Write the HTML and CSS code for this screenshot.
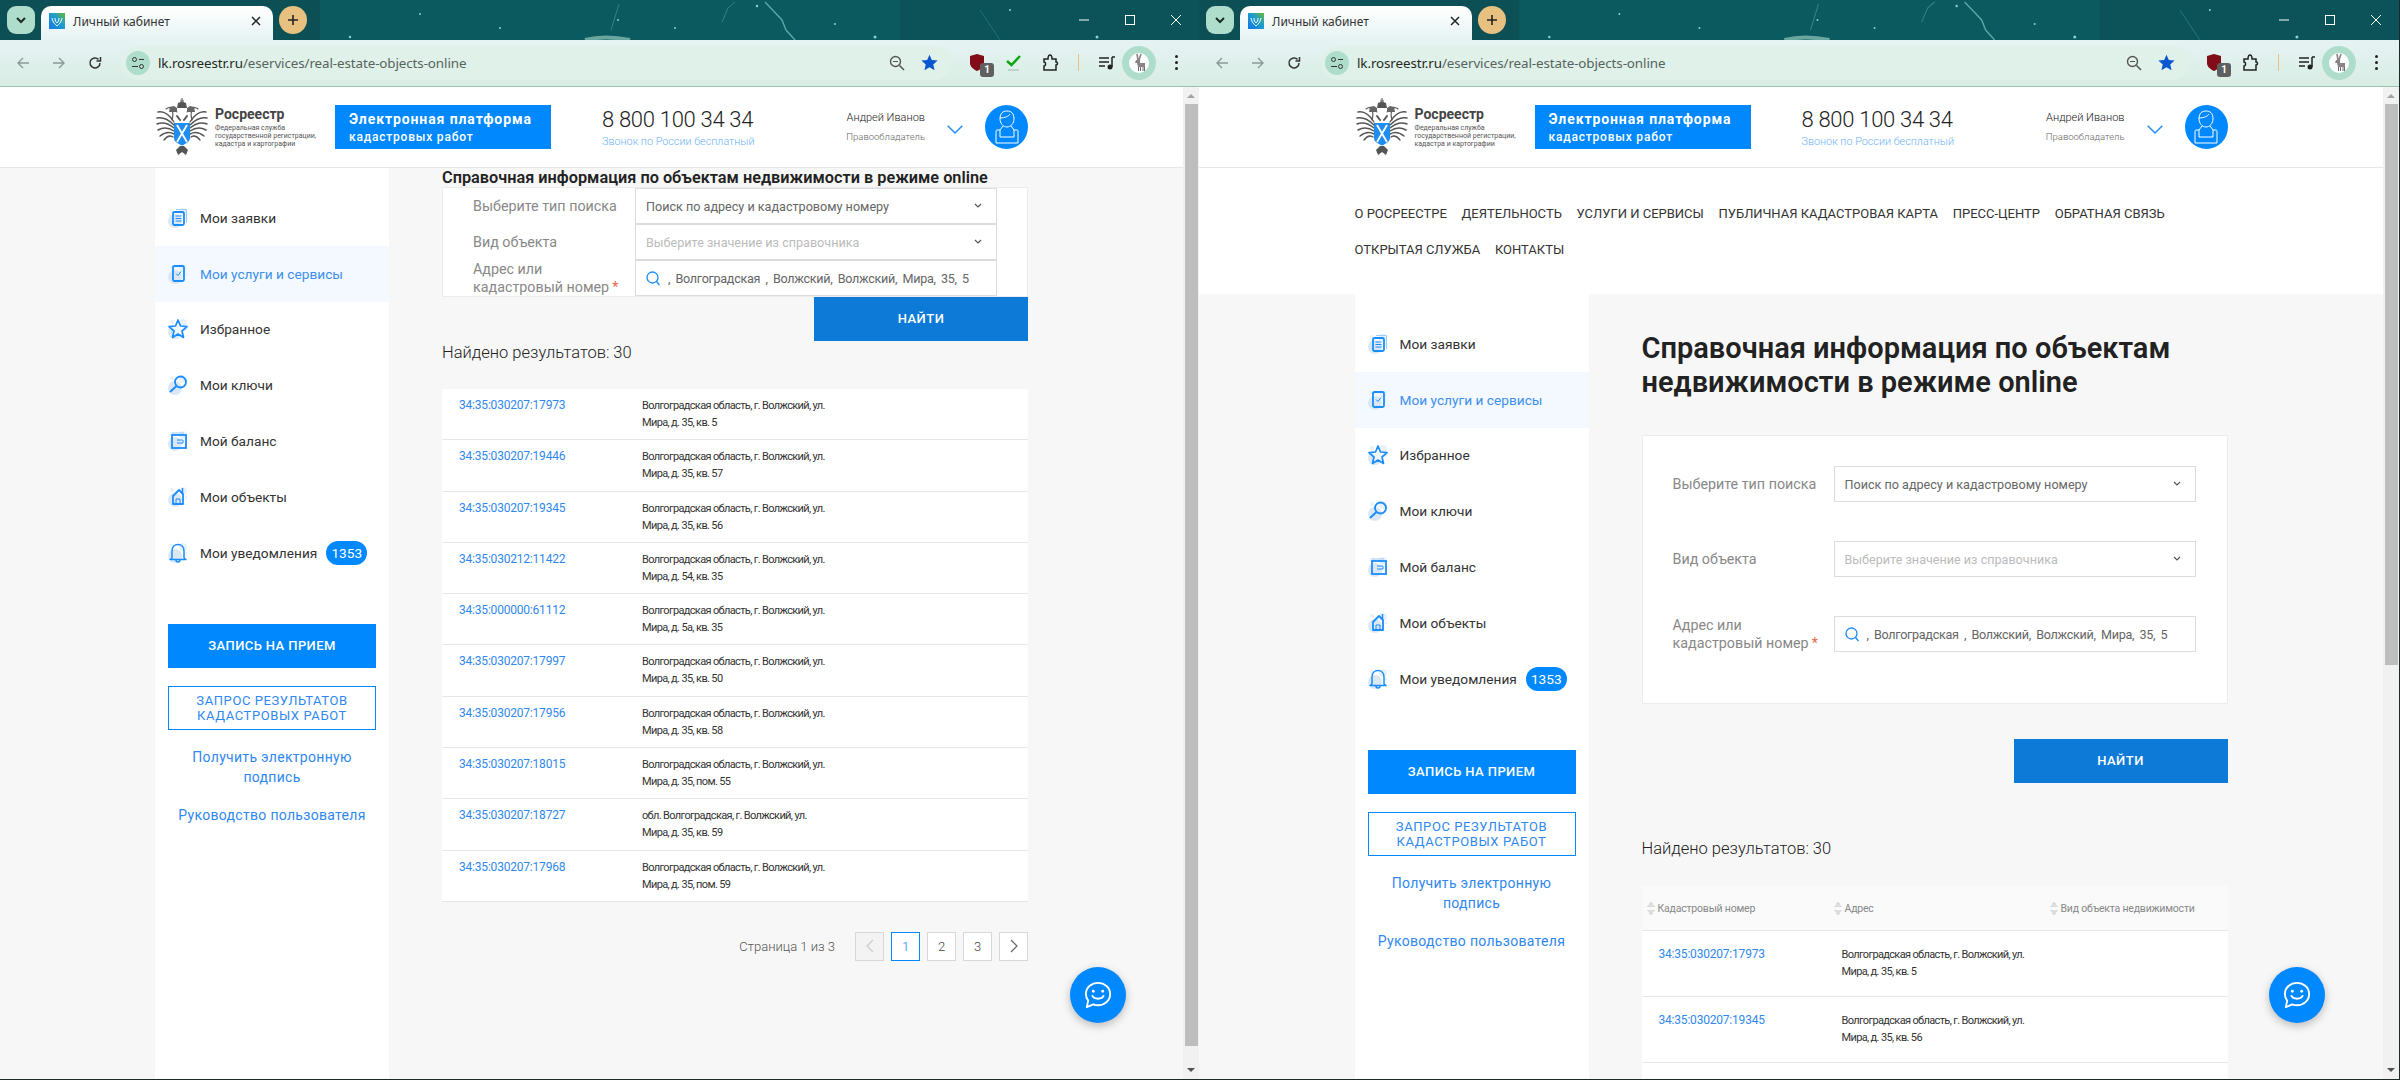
FILE: index.html
```html
<!DOCTYPE html>
<html lang="ru">
<head>
    <meta charset="UTF-8">
    <title>Личный кабинет</title>
    <link rel="stylesheet" href="styles.css">
</head>
<body>

<svg class="defs" width="0" height="0">
    <defs>
        <linearGradient id="favGrad" x1="0" y1="1" x2="1" y2="0">
            <stop offset="0" stop-color="#1476e8"/>
            <stop offset="0.6" stop-color="#20a0c8"/>
            <stop offset="1" stop-color="#6cb82c"/>
        </linearGradient>

        <symbol id="wallpaper" viewBox="0 0 1199 40" preserveAspectRatio="none">
            <rect width="1199" height="40" fill="#0b5a60"/>
            <rect width="320" height="40" fill="#0c4d52" opacity=".8"/>
            <rect x="900" width="299" height="40" fill="#0b4f57" opacity=".7"/>
            <path d="M619 4 L 611 30" stroke="#2f8487" stroke-width="1" fill="none"/>
            <path d="M765 2 L 782 20 L 786 30 L 795 40" stroke="#5aa7a6" stroke-width="1.400" fill="none"/>
            <path d="M722 22 L 728 8 L 735 2" stroke="#2f8487" stroke-width="1" fill="none"/>
            <path d="M980 10 L 1000 40" stroke="#1f7377" stroke-width="1" fill="none"/>
            <path d="M585 40 Q 605 35 630 40" stroke="#a8d8c8" stroke-width="4" fill="none" opacity=".6"/>
            <g fill="#8fd0cc">
                <circle cx="757" cy="6" r="1.200"/><circle cx="875" cy="37" r="1.500"/><circle cx="1097" cy="37" r="1.500"/>
                <circle cx="618" cy="20" r="1"/><circle cx="675" cy="28" r="1"/><circle cx="835" cy="24" r="1"/>
                <circle cx="350" cy="37" r="1.200"/><circle cx="420" cy="14" r="1"/><circle cx="500" cy="28" r="1"/>
                <circle cx="1010" cy="10" r="1"/>
            </g>
        </symbol>

        <symbol id="emblem" viewBox="0 0 52 58">
            <g fill="none" stroke="#555" stroke-linecap="round">
                <path d="M18 24 C13 16 7 13 2 14" stroke-width="1.300"/>
                <path d="M18 27 C12 21 6 19 1 20" stroke-width="1.500"/>
                <path d="M18 30 C12 25 6 24 1 26" stroke-width="1.500"/>
                <path d="M18 33 C12 29 7 29 2 32" stroke-width="1.500"/>
                <path d="M18 36 C13 33 9 34 4 38" stroke-width="1.500"/>
                <path d="M17 39 C14 37 11 38 8 42" stroke-width="1.400"/>
                <path d="M16 22 C18 15 17 12 14 10" stroke-width="1.200"/>
                <path d="M21 14 C18 9 14 8 10 11" stroke-width="1.100"/>
                <path d="M34 24 C39 16 45 13 50 14" stroke-width="1.300"/>
                <path d="M34 27 C40 21 46 19 51 20" stroke-width="1.500"/>
                <path d="M34 30 C40 25 46 24 51 26" stroke-width="1.500"/>
                <path d="M34 33 C40 29 45 29 50 32" stroke-width="1.500"/>
                <path d="M34 36 C39 33 43 34 48 38" stroke-width="1.500"/>
                <path d="M35 39 C38 37 41 38 44 42" stroke-width="1.400"/>
                <path d="M36 22 C34 15 35 12 38 10" stroke-width="1.200"/>
                <path d="M31 14 C34 9 38 8 42 11" stroke-width="1.100"/>
                <path d="M21 18 L24 22 M31 18 L28 22" stroke-width="2"/>
            </g>
            <path d="M26 0 v3 M24 3 h4" stroke="#4a4a4a" stroke-width="1" fill="none"/>
            <path d="M21 10 L22 5 L26 3.500 L30 5 L31 10 Z" fill="#555"/>
            <path d="M13 14 L14 9 L18 8 L21 10 L21 14 Z M31 14 L31 10 L34 8 L38 9 L39 14 Z" fill="#666"/>
            <path d="M24 48 L20 52 L22 57 L26 54 L30 57 L32 52 L28 48 Z" fill="#555"/>
            <path d="M18 25 H34 V40 C34 44 29 46 26 47.500 C23 46 18 44 18 40 Z" fill="#1f8cf0"/>
            <path d="M21 27 L31 44 M31 27 L21 44" stroke="#fff" stroke-width="1.800"/>
        </symbol>

        <symbol id="userIcon" viewBox="0 0 24 34">
            <g fill="none" stroke="#fff" stroke-width="1">
                <path d="M5 9 C5 3 8 1 12 1 C16 1 19 3 19 9 C19 13 16 17 12 17 C8 17 5 13 5 9 Z"/>
                <path d="M5 8 C10 8 14 6 15 4"/>
                <path d="M8 16 L5 20 H2 C1 20 1 21 1 22 V33 H23 V22 C23 21 23 20 22 20 H19 L16 16"/>
                <path d="M5 20 V27 H19 V20"/>
            </g>
        </symbol>

        <symbol id="chatIcon" viewBox="0 0 30 30">
            <path d="M15 2 C22 2 28 7 28 14 C28 21 22 26 15 26 C13 26 12 26 10 25 L3 28 L4.500 21 C3 19 2 17 2 14 C2 7 8 2 15 2 Z" fill="none" stroke="#fff" stroke-width="2" stroke-linejoin="round"/>
            <circle cx="10" cy="11" r="1.500" fill="#fff"/>
            <circle cx="20" cy="11" r="1.500" fill="#fff"/>
            <path d="M9 16 C11 20 19 20 21 16" fill="none" stroke="#fff" stroke-width="2" stroke-linecap="round"/>
        </symbol>

        <symbol id="searchBlue" viewBox="0 0 14 15">
            <circle cx="6.500" cy="6.500" r="5.500" fill="none" stroke="#1a8cff" stroke-width="1.300"/>
            <path d="M10.500 10.500 L13.500 14" stroke="#1a8cff" stroke-width="1.300"/>
        </symbol>

        <symbol id="blob" viewBox="0 0 20 22">
            <circle cx="7" cy="14" r="7" fill="#dbe8f4"/>
            <circle cx="15" cy="5" r="4" fill="#e8f1f9"/>
            <circle cx="4" cy="4" r="2" fill="#e8f1f9"/>
            <circle cx="18" cy="11" r="1.500" fill="#e8f1f9"/>
        </symbol>

        <symbol id="donkey" viewBox="0 0 20 20">
            <circle cx="10" cy="10" r="10" fill="#fff"/>
            <path d="M8 1 L9 7 M12 1 L10 7" stroke="#8a8288" stroke-width="1.600" fill="none"/>
            <path d="M7 7 H11 V10 H16 V14 H9 L8 10 L6 10 Z" fill="#8a8288"/>
            <path d="M9.500 14 V18 M11.500 14 V18 M14 14 V18 M15.500 14 V18" stroke="#6f686e" stroke-width="1"/>
        </symbol>
    </defs>
</svg>

<div class="desktop">

    <!-- левое окно -->
    <div class="window compact">
        <div class="tabstrip">
            <svg class="wallpaper"><use href="#wallpaper"/></svg>
            <span class="tab-list"><svg width="12" height="8" viewBox="0 0 12 8"><path d="M2 2 L6 6 L10 2" fill="none" stroke="#1c2a26" stroke-width="2"/></svg></span>
            <div class="tab">
                <svg class="favicon" viewBox="0 0 16 16"><rect width="16" height="16" fill="url(#favGrad)"/><path d="M3 5 C4 10 6 11 8 13 C10 11 12 10 13 5 M6 5 C6 8 7 9 8 10 C9 9 10 8 10 5" fill="none" stroke="#fff" stroke-width="1"/></svg>
                <span class="tab-title">Личный кабинет</span>
                <svg class="tab-close" width="10" height="10" viewBox="0 0 10 10"><path d="M1 1 L9 9 M9 1 L1 9" stroke="#222" stroke-width="1.500"/></svg>
            </div>
            <span class="new-tab"><svg width="12" height="12" viewBox="0 0 12 12"><path d="M6 1 V11 M1 6 H11" stroke="#222" stroke-width="1.600"/></svg></span>
            <div class="win-controls">
                <svg width="12" height="12" viewBox="0 0 12 12"><path d="M1 6 H11" stroke="#fff"/></svg>
                <svg width="12" height="12" viewBox="0 0 12 12"><rect x="1.500" y="1.500" width="9" height="9" fill="none" stroke="#fff"/></svg>
                <svg width="12" height="12" viewBox="0 0 12 12"><path d="M1 1 L11 11 M11 1 L1 11" stroke="#fff"/></svg>
            </div>
        </div>
        <div class="toolbar">
            <span class="nav-btn"><svg width="14" height="14" viewBox="0 0 14 14"><path d="M13 7 H2 M7 2 L2 7 L7 12" fill="none" stroke="#8b9b95" stroke-width="1.400"/></svg></span>
            <span class="nav-btn"><svg width="14" height="14" viewBox="0 0 14 14"><path d="M1 7 H12 M7 2 L12 7 L7 12" fill="none" stroke="#8b9b95" stroke-width="1.400"/></svg></span>
            <span class="nav-btn"><svg width="14" height="14" viewBox="0 0 14 14"><path d="M12 7 A5 5 0 1 1 10.500 3.400 M12.500 1 V5 H8.500" fill="none" stroke="#333" stroke-width="1.500"/></svg></span>
            <div class="omnibox">
                <span class="site-chip"><svg width="14" height="14" viewBox="0 0 14 14"><circle cx="3.500" cy="3.500" r="2" fill="none" stroke="#333"/><path d="M8 3.500 H13 M1 10.500 H7" stroke="#333"/><circle cx="10.500" cy="10.500" r="2" fill="none" stroke="#333"/></svg></span>
                <span class="url">lk.rosreestr.ru<span class="url-path">/eservices/real-estate-objects-online</span></span>
                <svg class="omni-zoom" width="16" height="16" viewBox="0 0 16 16"><circle cx="6.500" cy="6.500" r="5" fill="none" stroke="#555" stroke-width="1.400"/><path d="M10.500 10.500 L15 15" stroke="#555" stroke-width="1.600"/><path d="M4 6.500 H9" stroke="#555"/></svg>
                <svg class="omni-star" width="17" height="17" viewBox="0 0 24 24"><path d="M12 1 L15.300 8.600 L23.500 9.300 L17.300 14.800 L19.200 23 L12 18.700 L4.800 23 L6.700 14.800 L.500 9.300 L8.700 8.600 Z" fill="#0b57d0"/></svg>
            </div>
            <span class="tb-btn"><svg width="14" height="17" viewBox="0 0 14 17"><path d="M7 0 L14 2 V9 C14 13 10 15.500 7 17 C4 15.500 0 13 0 9 V2 Z" fill="#800d17"/></svg><span class="ext-badge">1</span></span>
            <span class="tb-btn"><svg width="15" height="18" viewBox="0 0 15 18"><path d="M1 7 L5.500 11 L14 2" fill="none" stroke="#0ba70b" stroke-width="2.500"/><path d="M2 16 H13" stroke="#9db5aa"/></svg></span>
            <span class="tb-btn"><svg width="16" height="18" viewBox="0 0 16 18"><path d="M1 5 H5 C5 2 6 1 7 1 C8 1 9 2 9 5 H13 V8 C15 8 15 11 13 11 V16 H1 V12 C3 12 3 8 1 8 Z" fill="none" stroke="#222" stroke-width="1.500"/></svg></span>
            <span class="tb-sep"></span>
            <span class="tb-btn"><svg width="16" height="14" viewBox="0 0 16 14"><path d="M0 2 H10 M0 6 H10 M0 10 H6" stroke="#222" stroke-width="1.500"/><path d="M13 1 V11" stroke="#222" stroke-width="1.500"/><circle cx="11" cy="11" r="2.500" fill="#222"/><path d="M13 1 H16" stroke="#222" stroke-width="1.500"/></svg></span>
            <span class="profile"><svg width="20" height="20"><use href="#donkey"/></svg></span>
            <span class="dots"><i></i><i></i><i></i></span>
        </div>

        <div class="page">
            <div class="viewport">
                <header class="site-head">
                    <div class="container head-row">
                        <svg class="emblem"><use href="#emblem"/></svg>
                        <div class="org">
                            <div class="org-name">Росреестр</div>
                            <div class="org-sub">Федеральная служба<br>государственной регистрации,<br>кадастра и картографии</div>
                        </div>
                        <div class="platform">
                            <div class="platform-title">Электронная платформа</div>
                            <div class="platform-sub">кадастровых работ</div>
                        </div>
                        <div class="phone">
                            <div class="phone-num">8 800 100 34 34</div>
                            <div class="phone-note">Звонок по России бесплатный</div>
                        </div>
                        <div class="who">
                            <div class="who-name">Андрей Иванов</div>
                            <div class="who-role">Правообладатель</div>
                        </div>
                        <svg class="who-arrow" width="16" height="9" viewBox="0 0 16 9"><path d="M.7 .7 L8 8 L15.300 .7" fill="none" stroke="#1a8cff" stroke-width="1.400"/></svg>
                        <span class="avatar"><svg width="24" height="34"><use href="#userIcon"/></svg></span>
                    </div>
                </header>

                <div class="container body-row">
                    <aside class="sidebar">
                        <nav class="menu">
                            <a class="menu-item"><span class="ico"><svg class="ico-blob"><use href="#blob"/></svg><svg class="ico-line" viewBox="0 0 20 22"><rect x="5" y="5" width="11" height="13" rx="1.500" fill="none" stroke="#1a8cff" stroke-width="1.800"/><path d="M7.500 9 H13.500 M7.500 11.500 H13.500 M7.500 14 H13.500" stroke="#1a8cff"/><path d="M8 2.500 H18.500 V16" fill="none" stroke="#9ccbf8"/></svg></span>Мои заявки</a>
                            <a class="menu-item active"><span class="ico"><svg class="ico-blob"><use href="#blob"/></svg><svg class="ico-line" viewBox="0 0 20 22"><rect x="5" y="3" width="11" height="15" rx="1.500" fill="none" stroke="#1a8cff" stroke-width="1.800"/><path d="M8 10.500 L10 12.500 L13 8.500" fill="none" stroke="#1a8cff"/></svg></span>Мои услуги и сервисы</a>
                            <a class="menu-item"><span class="ico"><svg class="ico-blob"><use href="#blob"/></svg><svg class="ico-line" viewBox="0 0 20 22"><path d="M10 2 L12.500 8 L19 8.600 L14 13 L15.500 19.500 L10 16 L4.500 19.500 L6 13 L1 8.600 L7.500 8 Z" fill="#fff" fill-opacity=".6" stroke="#1a8cff" stroke-width="1.700" stroke-linejoin="round"/></svg></span>Избранное</a>
                            <a class="menu-item"><span class="ico"><svg class="ico-blob"><use href="#blob"/></svg><svg class="ico-line" viewBox="0 0 20 22"><circle cx="12.500" cy="8" r="5.500" fill="none" stroke="#1a8cff" stroke-width="1.800"/><path d="M8.500 12 L2 18" stroke="#1a8cff" stroke-width="2"/></svg></span>Мои ключи</a>
                            <a class="menu-item"><span class="ico"><svg class="ico-blob"><use href="#blob"/></svg><svg class="ico-line" viewBox="0 0 20 22"><rect x="4" y="5" width="14" height="13" fill="none" stroke="#1a8cff" stroke-width="1.800"/><path d="M9 10 H15 V13 H9" fill="none" stroke="#1a8cff"/><path d="M4 3 H16" stroke="#9ccbf8"/></svg></span>Мой баланс</a>
                            <a class="menu-item"><span class="ico"><svg class="ico-blob"><use href="#blob"/></svg><svg class="ico-line" viewBox="0 0 20 22"><path d="M5 10 L11 4 L15 8 V18 H5 Z" fill="none" stroke="#1a8cff" stroke-width="1.800" stroke-linejoin="round"/><path d="M14.500 2 V7" stroke="#1a8cff" stroke-width="1.500"/><path d="M8 18 V13 H12 V18" fill="none" stroke="#1a8cff"/></svg></span>Мои объекты</a>
                            <a class="menu-item"><span class="ico"><svg class="ico-blob"><use href="#blob"/></svg><svg class="ico-line" viewBox="0 0 20 22"><path d="M4 16 V9 C4 5 6.500 2.500 10 2.500 C13.500 2.500 16 5 16 9 V16 L18 17.500 H2 Z" fill="none" stroke="#1a8cff" stroke-width="1.500" stroke-linejoin="round"/><path d="M8 18 A2 2 0 0 0 12 18" fill="none" stroke="#1a8cff" stroke-width="1.500"/></svg></span>Мои уведомления<span class="menu-badge">1353</span></a>
                        </nav>
                        <div class="side-actions">
                            <a class="btn-primary">ЗАПИСЬ НА ПРИЕМ</a>
                            <a class="btn-outline">ЗАПРОС РЕЗУЛЬТАТОВ<br>КАДАСТРОВЫХ РАБОТ</a>
                            <a class="side-link">Получить электронную подпись</a>
                            <a class="side-link">Руководство пользователя</a>
                        </div>
                    </aside>

                    <main class="main">
                        <h1 class="page-title">Справочная информация по объектам недвижимости в режиме online</h1>
                        <form class="search-card">
                            <div class="field">
                                <label class="field-label">Выберите тип поиска</label>
                                <div class="control"><span class="control-text">Поиск по адресу и кадастровому номеру</span><svg class="caret" width="8" height="6" viewBox="0 0 8 6"><path d="M1 1 L4 4 L7 1" fill="none" stroke="#555" stroke-width="1.200"/></svg></div>
                            </div>
                            <div class="field">
                                <label class="field-label">Вид объекта</label>
                                <div class="control"><span class="control-text muted">Выберите значение из справочника</span><svg class="caret" width="8" height="6" viewBox="0 0 8 6"><path d="M1 1 L4 4 L7 1" fill="none" stroke="#555" stroke-width="1.200"/></svg></div>
                            </div>
                            <div class="field">
                                <label class="field-label">Адрес или<br>кадастровый номер<span class="req">*</span></label>
                                <div class="control"><svg class="search-ico" width="14" height="15"><use href="#searchBlue"/></svg><span class="control-text addr">, Волгоградская , Волжский, Волжский, Мира, 35, 5</span></div>
                            </div>
                        </form>
                        <div class="find-row"><a class="btn-find">НАЙТИ</a></div>
                        <div class="found">Найдено результатов: 30</div>
                        <div class="results">
                            <div class="res-row"><a class="res-num">34:35:030207:17973</a><div class="res-addr">Волгоградская область, г. Волжский, ул.<br>Мира, д. 35, кв. 5</div></div>
                            <div class="res-row"><a class="res-num">34:35:030207:19446</a><div class="res-addr">Волгоградская область, г. Волжский, ул.<br>Мира, д. 35, кв. 57</div></div>
                            <div class="res-row"><a class="res-num">34:35:030207:19345</a><div class="res-addr">Волгоградская область, г. Волжский, ул.<br>Мира, д. 35, кв. 56</div></div>
                            <div class="res-row"><a class="res-num">34:35:030212:11422</a><div class="res-addr">Волгоградская область, г. Волжский, ул.<br>Мира, д. 54, кв. 35</div></div>
                            <div class="res-row"><a class="res-num">34:35:000000:61112</a><div class="res-addr">Волгоградская область, г. Волжский, ул.<br>Мира, д. 5а, кв. 35</div></div>
                            <div class="res-row"><a class="res-num">34:35:030207:17997</a><div class="res-addr">Волгоградская область, г. Волжский, ул.<br>Мира, д. 35, кв. 50</div></div>
                            <div class="res-row"><a class="res-num">34:35:030207:17956</a><div class="res-addr">Волгоградская область, г. Волжский, ул.<br>Мира, д. 35, кв. 58</div></div>
                            <div class="res-row"><a class="res-num">34:35:030207:18015</a><div class="res-addr">Волгоградская область, г. Волжский, ул.<br>Мира, д. 35, пом. 55</div></div>
                            <div class="res-row"><a class="res-num">34:35:030207:18727</a><div class="res-addr">обл. Волгоградская, г. Волжский, ул.<br>Мира, д. 35, кв. 59</div></div>
                            <div class="res-row"><a class="res-num">34:35:030207:17968</a><div class="res-addr">Волгоградская область, г. Волжский, ул.<br>Мира, д. 35, пом. 59</div></div>
                        </div>
                        <div class="pager">
                            <span class="pager-info">Страница 1 из 3</span>
                            <span class="pg disabled"><svg width="8" height="14" viewBox="0 0 8 14"><path d="M7 1 L1 7 L7 13" fill="none" stroke="#ccc" stroke-width="1.200"/></svg></span>
                            <span class="pg current">1</span>
                            <span class="pg">2</span>
                            <span class="pg">3</span>
                            <span class="pg"><svg width="8" height="14" viewBox="0 0 8 14"><path d="M1 1 L7 7 L1 13" fill="none" stroke="#666" stroke-width="1.200"/></svg></span>
                        </div>
                    </main>
                </div>
                <a class="chat-fab"><svg width="28" height="28"><use href="#chatIcon"/></svg></a>
            </div>
            <div class="scrollbar">
                <span class="sb-up"></span>
                <span class="sb-thumb"></span>
                <span class="sb-down"></span>
            </div>
        </div>
    </div>

    <!-- правое окно -->
    <div class="window full">
        <div class="tabstrip">
            <svg class="wallpaper"><use href="#wallpaper"/></svg>
            <span class="tab-list"><svg width="12" height="8" viewBox="0 0 12 8"><path d="M2 2 L6 6 L10 2" fill="none" stroke="#1c2a26" stroke-width="2"/></svg></span>
            <div class="tab">
                <svg class="favicon" viewBox="0 0 16 16"><rect width="16" height="16" fill="url(#favGrad)"/><path d="M3 5 C4 10 6 11 8 13 C10 11 12 10 13 5 M6 5 C6 8 7 9 8 10 C9 9 10 8 10 5" fill="none" stroke="#fff" stroke-width="1"/></svg>
                <span class="tab-title">Личный кабинет</span>
                <svg class="tab-close" width="10" height="10" viewBox="0 0 10 10"><path d="M1 1 L9 9 M9 1 L1 9" stroke="#222" stroke-width="1.500"/></svg>
            </div>
            <span class="new-tab"><svg width="12" height="12" viewBox="0 0 12 12"><path d="M6 1 V11 M1 6 H11" stroke="#222" stroke-width="1.600"/></svg></span>
            <div class="win-controls">
                <svg width="12" height="12" viewBox="0 0 12 12"><path d="M1 6 H11" stroke="#fff"/></svg>
                <svg width="12" height="12" viewBox="0 0 12 12"><rect x="1.500" y="1.500" width="9" height="9" fill="none" stroke="#fff"/></svg>
                <svg width="12" height="12" viewBox="0 0 12 12"><path d="M1 1 L11 11 M11 1 L1 11" stroke="#fff"/></svg>
            </div>
        </div>
        <div class="toolbar">
            <span class="nav-btn"><svg width="14" height="14" viewBox="0 0 14 14"><path d="M13 7 H2 M7 2 L2 7 L7 12" fill="none" stroke="#8b9b95" stroke-width="1.400"/></svg></span>
            <span class="nav-btn"><svg width="14" height="14" viewBox="0 0 14 14"><path d="M1 7 H12 M7 2 L12 7 L7 12" fill="none" stroke="#8b9b95" stroke-width="1.400"/></svg></span>
            <span class="nav-btn"><svg width="14" height="14" viewBox="0 0 14 14"><path d="M12 7 A5 5 0 1 1 10.500 3.400 M12.500 1 V5 H8.500" fill="none" stroke="#333" stroke-width="1.500"/></svg></span>
            <div class="omnibox">
                <span class="site-chip"><svg width="14" height="14" viewBox="0 0 14 14"><circle cx="3.500" cy="3.500" r="2" fill="none" stroke="#333"/><path d="M8 3.500 H13 M1 10.500 H7" stroke="#333"/><circle cx="10.500" cy="10.500" r="2" fill="none" stroke="#333"/></svg></span>
                <span class="url">lk.rosreestr.ru<span class="url-path">/eservices/real-estate-objects-online</span></span>
                <svg class="omni-zoom" width="16" height="16" viewBox="0 0 16 16"><circle cx="6.500" cy="6.500" r="5" fill="none" stroke="#555" stroke-width="1.400"/><path d="M10.500 10.500 L15 15" stroke="#555" stroke-width="1.600"/><path d="M4 6.500 H9" stroke="#555"/></svg>
                <svg class="omni-star" width="17" height="17" viewBox="0 0 24 24"><path d="M12 1 L15.300 8.600 L23.500 9.300 L17.300 14.800 L19.200 23 L12 18.700 L4.800 23 L6.700 14.800 L.500 9.300 L8.700 8.600 Z" fill="#0b57d0"/></svg>
            </div>
            <span class="tb-btn"><svg width="14" height="17" viewBox="0 0 14 17"><path d="M7 0 L14 2 V9 C14 13 10 15.500 7 17 C4 15.500 0 13 0 9 V2 Z" fill="#800d17"/></svg><span class="ext-badge">1</span></span>
            <span class="tb-btn"><svg width="16" height="18" viewBox="0 0 16 18"><path d="M1 5 H5 C5 2 6 1 7 1 C8 1 9 2 9 5 H13 V8 C15 8 15 11 13 11 V16 H1 V12 C3 12 3 8 1 8 Z" fill="none" stroke="#222" stroke-width="1.500"/></svg></span>
            <span class="tb-sep"></span>
            <span class="tb-btn"><svg width="16" height="14" viewBox="0 0 16 14"><path d="M0 2 H10 M0 6 H10 M0 10 H6" stroke="#222" stroke-width="1.500"/><path d="M13 1 V11" stroke="#222" stroke-width="1.500"/><circle cx="11" cy="11" r="2.500" fill="#222"/><path d="M13 1 H16" stroke="#222" stroke-width="1.500"/></svg></span>
            <span class="profile"><svg width="20" height="20"><use href="#donkey"/></svg></span>
            <span class="dots"><i></i><i></i><i></i></span>
        </div>

        <div class="page">
            <div class="viewport">
                <header class="site-head">
                    <div class="container head-row">
                        <svg class="emblem"><use href="#emblem"/></svg>
                        <div class="org">
                            <div class="org-name">Росреестр</div>
                            <div class="org-sub">Федеральная служба<br>государственной регистрации,<br>кадастра и картографии</div>
                        </div>
                        <div class="platform">
                            <div class="platform-title">Электронная платформа</div>
                            <div class="platform-sub">кадастровых работ</div>
                        </div>
                        <div class="phone">
                            <div class="phone-num">8 800 100 34 34</div>
                            <div class="phone-note">Звонок по России бесплатный</div>
                        </div>
                        <div class="who">
                            <div class="who-name">Андрей Иванов</div>
                            <div class="who-role">Правообладатель</div>
                        </div>
                        <svg class="who-arrow" width="16" height="9" viewBox="0 0 16 9"><path d="M.7 .7 L8 8 L15.300 .7" fill="none" stroke="#1a8cff" stroke-width="1.400"/></svg>
                        <span class="avatar"><svg width="24" height="34"><use href="#userIcon"/></svg></span>
                    </div>
                </header>

                <nav class="site-nav">
                    <div class="container nav-links">
                        <a>О РОСРЕЕСТРЕ</a>
                        <a>ДЕЯТЕЛЬНОСТЬ</a>
                        <a>УСЛУГИ И СЕРВИСЫ</a>
                        <a>ПУБЛИЧНАЯ КАДАСТРОВАЯ КАРТА</a>
                        <a>ПРЕСС-ЦЕНТР</a>
                        <a>ОБРАТНАЯ СВЯЗЬ</a>
                        <a>ОТКРЫТАЯ СЛУЖБА</a>
                        <a>КОНТАКТЫ</a>
                    </div>
                </nav>

                <div class="container body-row">
                    <aside class="sidebar">
                        <nav class="menu">
                            <a class="menu-item"><span class="ico"><svg class="ico-blob"><use href="#blob"/></svg><svg class="ico-line" viewBox="0 0 20 22"><rect x="5" y="5" width="11" height="13" rx="1.500" fill="none" stroke="#1a8cff" stroke-width="1.800"/><path d="M7.500 9 H13.500 M7.500 11.500 H13.500 M7.500 14 H13.500" stroke="#1a8cff"/><path d="M8 2.500 H18.500 V16" fill="none" stroke="#9ccbf8"/></svg></span>Мои заявки</a>
                            <a class="menu-item active"><span class="ico"><svg class="ico-blob"><use href="#blob"/></svg><svg class="ico-line" viewBox="0 0 20 22"><rect x="5" y="3" width="11" height="15" rx="1.500" fill="none" stroke="#1a8cff" stroke-width="1.800"/><path d="M8 10.500 L10 12.500 L13 8.500" fill="none" stroke="#1a8cff"/></svg></span>Мои услуги и сервисы</a>
                            <a class="menu-item"><span class="ico"><svg class="ico-blob"><use href="#blob"/></svg><svg class="ico-line" viewBox="0 0 20 22"><path d="M10 2 L12.500 8 L19 8.600 L14 13 L15.500 19.500 L10 16 L4.500 19.500 L6 13 L1 8.600 L7.500 8 Z" fill="#fff" fill-opacity=".6" stroke="#1a8cff" stroke-width="1.700" stroke-linejoin="round"/></svg></span>Избранное</a>
                            <a class="menu-item"><span class="ico"><svg class="ico-blob"><use href="#blob"/></svg><svg class="ico-line" viewBox="0 0 20 22"><circle cx="12.500" cy="8" r="5.500" fill="none" stroke="#1a8cff" stroke-width="1.800"/><path d="M8.500 12 L2 18" stroke="#1a8cff" stroke-width="2"/></svg></span>Мои ключи</a>
                            <a class="menu-item"><span class="ico"><svg class="ico-blob"><use href="#blob"/></svg><svg class="ico-line" viewBox="0 0 20 22"><rect x="4" y="5" width="14" height="13" fill="none" stroke="#1a8cff" stroke-width="1.800"/><path d="M9 10 H15 V13 H9" fill="none" stroke="#1a8cff"/><path d="M4 3 H16" stroke="#9ccbf8"/></svg></span>Мой баланс</a>
                            <a class="menu-item"><span class="ico"><svg class="ico-blob"><use href="#blob"/></svg><svg class="ico-line" viewBox="0 0 20 22"><path d="M5 10 L11 4 L15 8 V18 H5 Z" fill="none" stroke="#1a8cff" stroke-width="1.800" stroke-linejoin="round"/><path d="M14.500 2 V7" stroke="#1a8cff" stroke-width="1.500"/><path d="M8 18 V13 H12 V18" fill="none" stroke="#1a8cff"/></svg></span>Мои объекты</a>
                            <a class="menu-item"><span class="ico"><svg class="ico-blob"><use href="#blob"/></svg><svg class="ico-line" viewBox="0 0 20 22"><path d="M4 16 V9 C4 5 6.500 2.500 10 2.500 C13.500 2.500 16 5 16 9 V16 L18 17.500 H2 Z" fill="none" stroke="#1a8cff" stroke-width="1.500" stroke-linejoin="round"/><path d="M8 18 A2 2 0 0 0 12 18" fill="none" stroke="#1a8cff" stroke-width="1.500"/></svg></span>Мои уведомления<span class="menu-badge">1353</span></a>
                        </nav>
                        <div class="side-actions">
                            <a class="btn-primary">ЗАПИСЬ НА ПРИЕМ</a>
                            <a class="btn-outline">ЗАПРОС РЕЗУЛЬТАТОВ<br>КАДАСТРОВЫХ РАБОТ</a>
                            <a class="side-link">Получить электронную подпись</a>
                            <a class="side-link">Руководство пользователя</a>
                        </div>
                    </aside>

                    <main class="main">
                        <h1 class="page-title">Справочная информация по объектам недвижимости в режиме online</h1>
                        <form class="search-card">
                            <div class="field">
                                <label class="field-label">Выберите тип поиска</label>
                                <div class="control"><span class="control-text">Поиск по адресу и кадастровому номеру</span><svg class="caret" width="8" height="6" viewBox="0 0 8 6"><path d="M1 1 L4 4 L7 1" fill="none" stroke="#555" stroke-width="1.200"/></svg></div>
                            </div>
                            <div class="field">
                                <label class="field-label">Вид объекта</label>
                                <div class="control"><span class="control-text muted">Выберите значение из справочника</span><svg class="caret" width="8" height="6" viewBox="0 0 8 6"><path d="M1 1 L4 4 L7 1" fill="none" stroke="#555" stroke-width="1.200"/></svg></div>
                            </div>
                            <div class="field">
                                <label class="field-label">Адрес или<br>кадастровый номер<span class="req">*</span></label>
                                <div class="control"><svg class="search-ico" width="14" height="15"><use href="#searchBlue"/></svg><span class="control-text addr">, Волгоградская , Волжский, Волжский, Мира, 35, 5</span></div>
                            </div>
                        </form>
                        <div class="find-row"><a class="btn-find">НАЙТИ</a></div>
                        <div class="found">Найдено результатов: 30</div>
                        <div class="results">
                            <div class="res-head">
                                <span class="th th-num"><i class="sort"></i>Кадастровый номер</span>
                                <span class="th th-addr"><i class="sort"></i>Адрес</span>
                                <span class="th"><i class="sort"></i>Вид объекта недвижимости</span>
                            </div>
                            <div class="res-row"><a class="res-num">34:35:030207:17973</a><div class="res-addr">Волгоградская область, г. Волжский, ул.<br>Мира, д. 35, кв. 5</div></div>
                            <div class="res-row"><a class="res-num">34:35:030207:19345</a><div class="res-addr">Волгоградская область, г. Волжский, ул.<br>Мира, д. 35, кв. 56</div></div>
                            <div class="res-row"></div>
                        </div>
                    </main>
                </div>
                <a class="chat-fab"><svg width="28" height="28"><use href="#chatIcon"/></svg></a>
            </div>
            <div class="scrollbar">
                <span class="sb-up"></span>
                <span class="sb-thumb"></span>
                <span class="sb-down"></span>
            </div>
        </div>
    </div>

</div>

</body>
</html>
```
FILE: styles.css
```css
* {
    box-sizing: border-box;
}

html, body {
    margin: 0;
    height: 100%;
    overflow: hidden;
}

body {
    font-family: Roboto, "Liberation Sans", sans-serif;
    color: #333;
}

a {
    text-decoration: none;
    color: inherit;
}

.defs {
    position: absolute;
}

.desktop {
    display: flex;
    height: 1080px;
    background: #1c2a2c;
}

.window {
    width: 1199px;
    height: 1079px;
    display: flex;
    flex-direction: column;
    flex: none;
}

.window.full {
    width: 1200px;
}

/* browser frame */
.tabstrip {
    position: relative;
    height: 40px;
    display: flex;
    align-items: flex-end;
    padding-left: 7px;
    flex: none;
    overflow: hidden;
}

.wallpaper {
    position: absolute;
    left: 0;
    top: 0;
    width: 100%;
    height: 40px;
}

.tab-list {
    position: relative;
    width: 28px;
    height: 28px;
    margin-bottom: 6px;
    border-radius: 9px;
    background: #aeddcb;
    display: flex;
    align-items: center;
    justify-content: center;
}

.tab {
    position: relative;
    width: 232px;
    height: 34px;
    margin-left: 6px;
    border-radius: 10px 10px 0 0;
    background: linear-gradient(#fff, #e6f3f3);
    display: flex;
    align-items: center;
    padding: 0 12px 4px 8px;
}

.favicon {
    width: 16px;
    height: 16px;
    flex: none;
}

.tab-title {
    margin-left: 8px;
    flex: 1;
    font: 12px "Noto Sans", sans-serif;
    color: #333;
}

.new-tab {
    position: relative;
    width: 28px;
    height: 28px;
    margin: 0 0 6px 6px;
    border-radius: 50%;
    background: #e8c080;
    display: flex;
    align-items: center;
    justify-content: center;
}

.win-controls {
    position: relative;
    margin-left: auto;
    height: 40px;
    display: flex;
    align-items: center;
    gap: 34px;
    padding: 0 17px 0 0;
}

.toolbar {
    height: 47px;
    flex: none;
    display: flex;
    align-items: center;
    padding: 0 4px 1px 5px;
    background: linear-gradient(#e6f3f3, #d8ede4);
    border-bottom: 1px solid #9cc2b4;
}

.nav-btn {
    width: 36px;
    height: 36px;
    flex: none;
    display: flex;
    align-items: center;
    justify-content: center;
}

.omnibox {
    flex: 1;
    height: 34px;
    margin-left: 9px;
    margin-right: 6px;
    border-radius: 17px;
    background: #e0f1e9;
    display: flex;
    align-items: center;
    padding-right: 14px;
}

.site-chip {
    width: 24px;
    height: 24px;
    margin-left: 4px;
    border-radius: 50%;
    background: #aeddcb;
    display: flex;
    align-items: center;
    justify-content: center;
    flex: none;
}

.url {
    margin-left: 8px;
    flex: 1;
    font: 13.400px "Noto Sans", sans-serif;
    letter-spacing: -0.1px;
    color: #1f2a26;
}

.url-path {
    color: #56645e;
}

.omni-star {
    margin-left: 16px;
}

.tb-btn {
    position: relative;
    width: 37px;
    height: 36px;
    flex: none;
    display: flex;
    align-items: center;
    justify-content: center;
}

.ext-badge {
    position: absolute;
    left: 22px;
    top: 18px;
    width: 14px;
    height: 14px;
    border-radius: 3px;
    background: #5f5f5f;
    color: #fff;
    font-size: 10px;
    font-weight: 700;
    line-height: 14px;
    text-align: center;
}

.tb-sep {
    width: 1px;
    height: 17px;
    margin: 0 9px;
    background: #e8c080;
    flex: none;
}

.profile {
    width: 34px;
    height: 34px;
    margin-left: -3px;
    border-radius: 50%;
    background: #aeddcb;
    display: flex;
    align-items: center;
    justify-content: center;
    flex: none;
}

.dots {
    width: 37px;
    margin-left: 2px;
    display: flex;
    flex-direction: column;
    align-items: center;
    gap: 3px;
}

.dots i {
    width: 3px;
    height: 3px;
    border-radius: 50%;
    background: #222;
}

/* page */
.page {
    flex: 1;
    display: flex;
    min-height: 0;
    background: #f7f7f7;
}

.viewport {
    position: relative;
    flex: 1;
    min-width: 0;
    overflow: hidden;
}

.scrollbar {
    width: 16px;
    flex: none;
    display: flex;
    flex-direction: column;
    align-items: center;
    background: #f1f1f1;
}

.sb-up, .sb-down {
    width: 0;
    height: 0;
    border-left: 4px solid transparent;
    border-right: 4px solid transparent;
    flex: none;
}

.sb-up {
    margin-top: 7px;
    border-bottom: 4px solid #a3a3a3;
}

.sb-down {
    margin-top: auto;
    margin-bottom: 7px;
    border-top: 4px solid #505050;
}

.sb-thumb {
    width: 13px;
    margin-top: 6px;
    background: #bdbdbd;
}

.compact .sb-thumb {
    height: 942px;
}

.full .sb-thumb {
    height: 561px;
}

.container {
    width: 873px;
    margin: 0 auto;
}

.site-head {
    height: 81px;
    background: #fff;
    border-bottom: 1px solid #e7e7e7;
}

.head-row {
    height: 80px;
    display: flex;
    align-items: center;
    padding-left: 1px;
}

.emblem {
    width: 52px;
    height: 58px;
    flex: none;
}

.org {
    width: 120px;
    margin-left: 7px;
    flex: none;
}

.org-name {
    font-size: 14px;
    font-weight: 700;
    line-height: 16px;
    color: #444;
}

.org-sub {
    margin-top: 2px;
    font-size: 7px;
    line-height: 8px;
    color: #555;
}

.platform {
    width: 216px;
    height: 44px;
    flex: none;
    background: #0088ff;
    color: #fff;
    padding: 6px 0 0 14px;
}

.platform-title {
    font-size: 14px;
    font-weight: 700;
    line-height: 16px;
    letter-spacing: .9px;
}

.platform-sub {
    margin-top: 2px;
    font-size: 12px;
    font-weight: 500;
    line-height: 16px;
    letter-spacing: .8px;
}

.phone {
    width: 156px;
    margin-left: 51px;
    flex: none;
    white-space: nowrap;
}

.phone-num {
    font-size: 22px;
    font-weight: 300;
    letter-spacing: -0.3px;
    line-height: 28px;
    color: #222;
}

.phone-note {
    font-size: 10.800px;
    font-weight: 300;
    line-height: 15px;
    color: #6db3f7;
}

.who {
    width: 96px;
    margin-left: 71px;
    flex: none;
    text-align: right;
    white-space: nowrap;
}

.who-name {
    font-size: 11px;
    font-weight: 300;
    line-height: 16px;
    color: #222;
}

.who-role {
    margin-top: 4px;
    font-size: 9.500px;
    font-weight: 300;
    line-height: 14px;
    color: #666;
}

.who-arrow {
    margin-left: 22px;
    margin-top: 4px;
    flex: none;
}

.avatar {
    width: 43px;
    height: 44px;
    margin-left: 22px;
    border-radius: 50%;
    background: #0088ff;
    display: flex;
    align-items: center;
    justify-content: center;
    flex: none;
}

.site-nav {
    height: 126px;
    background: #fff;
}

.nav-links {
    display: flex;
    flex-wrap: wrap;
    column-gap: 14.700px;
    padding-top: 28px;
}

.nav-links a {
    font-size: 13px;
    font-weight: 400;
    line-height: 36px;
    color: #333;
}

/* sidebar */
.body-row {
    display: flex;
    align-items: stretch;
}

.sidebar {
    width: 234px;
    min-height: 1000px;
    flex: none;
    background: #fff;
    padding-top: 22px;
}

.menu-item {
    height: 55.800px;
    display: flex;
    align-items: center;
    padding-left: 13px;
    font-size: 13.700px;
    color: #333;
}

.menu-item.active {
    background: #f3f9ff;
    color: #3d8fee;
}

.ico {
    position: relative;
    width: 20px;
    height: 22px;
    margin-right: 12px;
    flex: none;
}

.ico-blob, .ico-line {
    position: absolute;
    left: 0;
    top: 0;
    width: 20px;
    height: 22px;
}

.menu-badge {
    margin-left: 9px;
    width: 41px;
    height: 24px;
    border-radius: 12px;
    background: #0088ff;
    color: #fff;
    line-height: 24px;
    text-align: center;
}

.side-actions {
    margin-top: 43px;
    padding: 0 13px;
    display: flex;
    flex-direction: column;
    align-items: center;
}

.btn-primary, .btn-outline {
    width: 208px;
    height: 44px;
    display: flex;
    align-items: center;
    justify-content: center;
    text-align: center;
    font-size: 13px;
}

.btn-primary {
    background: #0088ff;
    color: #fff;
    font-weight: 500;
    letter-spacing: .4px;
}

.btn-outline {
    margin-top: 18px;
    border: 1px solid #0088ff;
    color: #2f88f0;
    line-height: 15px;
    letter-spacing: .6px;
}

.side-link {
    margin-top: 17px;
    width: 190px;
    text-align: center;
    font-size: 14px;
    line-height: 20px;
    letter-spacing: .3px;
    color: #2f88f0;
}

.side-link + .side-link {
    margin-top: 18px;
}

/* main column */
.main {
    width: 586px;
    margin-left: 53px;
    flex: none;
}

.page-title {
    margin: 0;
    color: #222;
    font-weight: 600;
}

.compact .page-title {
    padding-top: 1px;
    font-size: 16.300px;
    line-height: 18px;
}

.full .page-title {
    padding-top: 37px;
    font-size: 29px;
    line-height: 34px;
}

.search-card {
    background: #fff;
    border: 1px solid #ececec;
}

.field {
    display: flex;
    align-items: center;
    height: 36px;
}

.field-label {
    flex: none;
    padding-left: 30px;
    font-size: 14.300px;
    line-height: 18px;
    color: #888;
}

.compact .field-label {
    width: 192px;
}

.full .field-label {
    width: 191px;
}

.control {
    width: 362px;
    height: 36px;
    display: flex;
    align-items: center;
    padding: 0 14px 0 10px;
    background: #fff;
    border: 1px solid #dcdcdc;
    font-size: 12.600px;
}

.control-text {
    flex: 1;
    color: #666;
    white-space: nowrap;
}

.control-text.muted {
    color: #bbb;
}

.control-text.addr {
    margin-left: 8px;
    letter-spacing: -0.3px;
    word-spacing: 2.500px;
}

.search-ico {
    flex: none;
}

.req {
    margin-left: 3px;
    color: #e9674a;
}

.compact .search-card {
    height: 110px;
}

.full .search-card {
    height: 269px;
    margin-top: 36px;
    padding-top: 30px;
}

.full .field {
    margin-bottom: 39px;
}

.find-row {
    display: flex;
    justify-content: flex-end;
}

.full .find-row {
    margin-top: 35px;
}

.btn-find {
    width: 214px;
    height: 44px;
    background: #0e7ad8;
    color: #fff;
    font-size: 13px;
    font-weight: 500;
    letter-spacing: .5px;
    line-height: 44px;
    text-align: center;
}

.found {
    font-size: 16.500px;
    font-weight: 300;
    line-height: 20px;
    color: #222;
}

.compact .found {
    margin-top: 2px;
}

.full .found {
    margin-top: 56px;
}

.results {
    background: #fff;
}

.compact .results {
    margin-top: 26px;
}

.full .results {
    margin-top: 27px;
}

.res-head {
    height: 45px;
    display: flex;
    align-items: center;
    background: #fafafa;
    border-bottom: 1px solid #e6e6e6;
    font-size: 10.500px;
    letter-spacing: -0.2px;
    color: #888;
}

.th {
    display: flex;
    align-items: center;
}

.th-num {
    width: 192px;
    padding-left: 5px;
}

.th-addr {
    width: 216px;
}

.sort {
    width: 8px;
    height: 15px;
    margin-right: 3px;
    background:
        linear-gradient(to bottom right, transparent 50%, #ddd 50%) 0 0 / 4px 6px no-repeat,
        linear-gradient(to bottom left, transparent 50%, #ddd 50%) 4px 0 / 4px 6px no-repeat,
        linear-gradient(to top right, transparent 50%, #ddd 50%) 0 9px / 4px 6px no-repeat,
        linear-gradient(to top left, transparent 50%, #ddd 50%) 4px 9px / 4px 6px no-repeat;
}

.res-row {
    display: flex;
    align-items: flex-start;
    border-bottom: 1px solid #e6e6e6;
}

.compact .res-row {
    height: 51.300px;
    padding-top: 8px;
}

.full .res-row {
    height: 66px;
    padding-top: 15px;
}

.res-num {
    width: 200px;
    padding-left: 17px;
    flex: none;
    font-size: 12px;
    line-height: 17px;
    letter-spacing: -0.2px;
    color: #2f88f0;
}

.res-addr {
    font-size: 11px;
    line-height: 17px;
    letter-spacing: -0.65px;
    color: #333;
}

.pager {
    display: flex;
    align-items: center;
    justify-content: flex-end;
    gap: 7px;
    margin-top: 30px;
}

.pager-info {
    margin-right: 13px;
    font-size: 13px;
    font-weight: 300;
    color: #555;
}

.pg {
    width: 29px;
    height: 29px;
    border: 1px solid #d8d8d8;
    background: #fff;
    display: flex;
    align-items: center;
    justify-content: center;
    font-size: 13px;
    font-weight: 300;
    color: #444;
}

.pg.disabled {
    background: #f3f3f3;
}

.pg.current {
    border-color: #0088ff;
    color: #0088ff;
}

.chat-fab {
    position: absolute;
    left: 1070px;
    top: 880px;
    width: 56px;
    height: 56px;
    border-radius: 50%;
    background: #0088ff;
    box-shadow: 0 3px 8px rgba(0, 0, 0, .25);
    display: flex;
    align-items: center;
    justify-content: center;
}
```
